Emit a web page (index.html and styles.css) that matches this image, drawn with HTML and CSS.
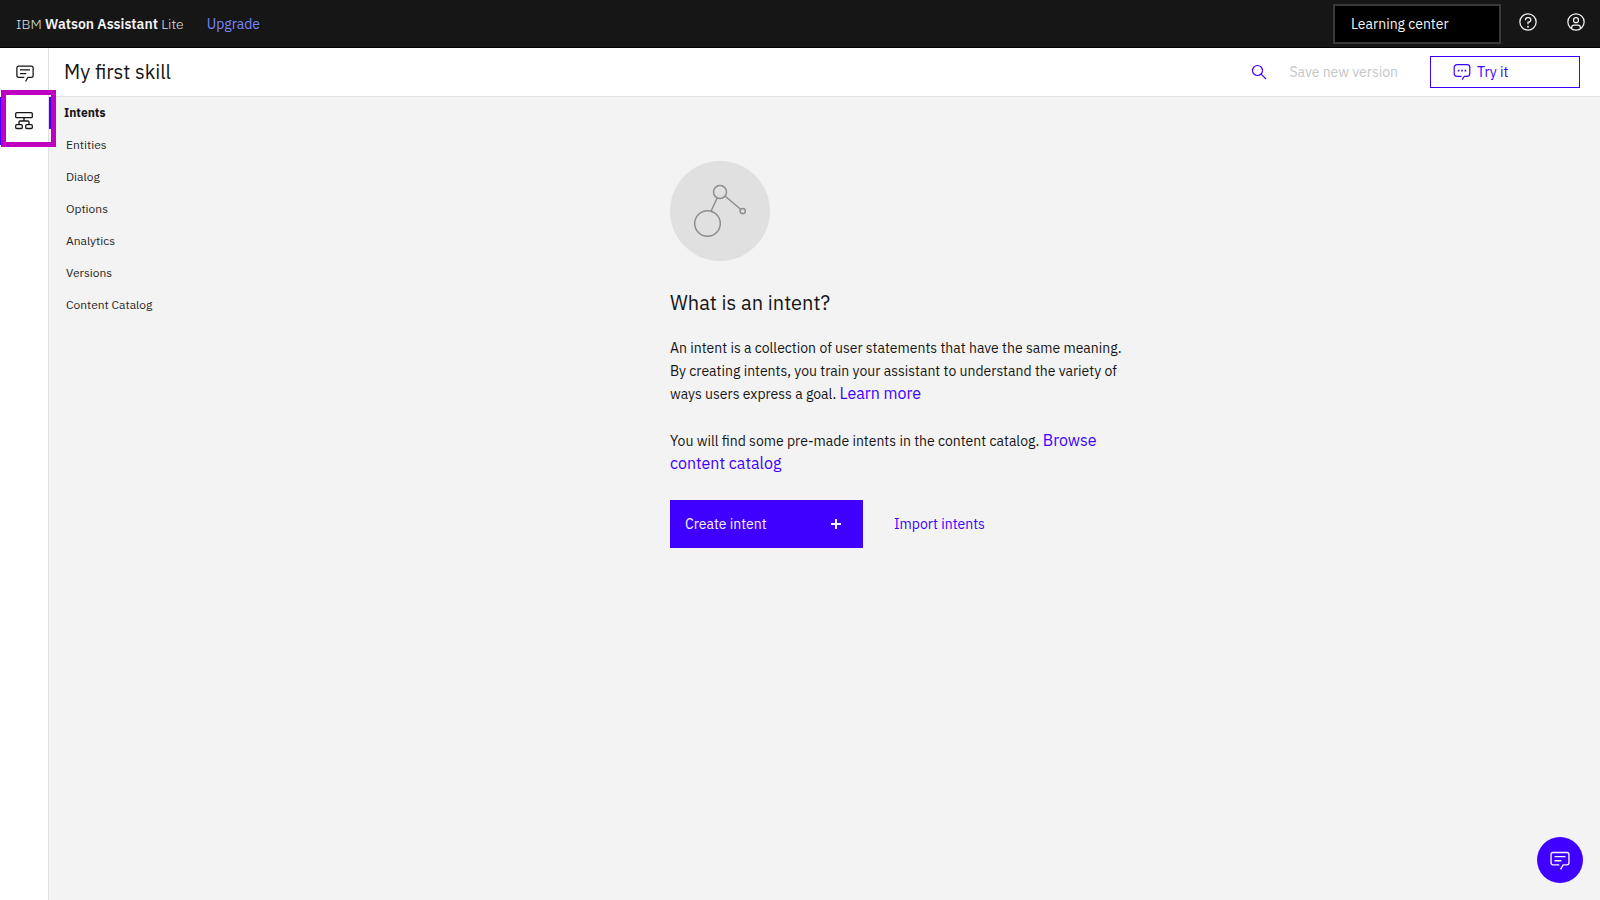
FILE: index.html
```
<!DOCTYPE html>
<html lang="en">
<head>
    <meta charset="UTF-8">
    <meta name="viewport" content="width=device-width, initial-scale=1.0">
    <title>My first skill - IBM Watson Assistant</title>
    <link rel="stylesheet" href="styles.css">
</head>
<body>
    <header class="topbar">
        <div class="brand">IBM <strong>Watson Assistant</strong> Lite</div>
        <a class="upgrade" href="#">Upgrade</a>
        <div class="topbar-right">
            <button class="learning">Learning center</button>
            <button class="icon-button" aria-label="Help">
                <svg width="20" height="20" viewBox="0 0 32 32" fill="currentColor">
                    <path d="M16 2a14 14 0 1 0 14 14A14 14 0 0 0 16 2Zm0 26a12 12 0 1 1 12-12 12 12 0 0 1-12 12Z"/>
                    <circle cx="16" cy="23.5" r="1.5"/>
                    <path d="M17 8h-1.5a4.49 4.49 0 0 0-4.5 4.5v.5h2v-.5a2.5 2.5 0 0 1 2.5-2.5H17a2.5 2.5 0 0 1 0 5h-2v4.5h2V17a4.5 4.5 0 0 0 0-9Z"/>
                </svg>
            </button>
            <button class="icon-button" aria-label="Account">
                <svg width="20" height="20" viewBox="0 0 32 32" fill="currentColor">
                    <path d="M16 8a5 5 0 1 0 5 5 5 5 0 0 0-5-5Zm0 8a3 3 0 1 1 3-3 3 3 0 0 1-3 3Z"/>
                    <path d="M16 2a14 14 0 1 0 14 14A14 14 0 0 0 16 2ZM10 26.4V25a3 3 0 0 1 3-3h6a3 3 0 0 1 3 3v1.4a11.9 11.9 0 0 1-12 0Zm14-1.5a5 5 0 0 0-5-4.900h-6a5 5 0 0 0-5 4.9 12 12 0 1 1 16 0Z"/>
                </svg>
            </button>
        </div>
    </header>

    <div class="layout">
        <nav class="rail" aria-label="Main">
            <a class="rail-item" href="#" aria-label="Assistants">
                <svg width="20" height="20" viewBox="0 0 32 32" fill="currentColor">
                    <path d="M17.74 30 16 29l4-7h6a2 2 0 0 0 2-2V8a2 2 0 0 0-2-2H6a2 2 0 0 0-2 2v12a2 2 0 0 0 2 2h9v2H6a4 4 0 0 1-4-4V8a4 4 0 0 1 4-4h20a4 4 0 0 1 4 4v12a4 4 0 0 1-4 4h-4.84Z"/>
                    <path d="M8 10h16v2H8zM8 16h10v2H8z"/>
                </svg>
            </a>
            <a class="rail-item active" href="#" aria-label="Skills">
                <svg width="20" height="20" viewBox="0 0 20 20" fill="none" stroke="currentColor" stroke-width="1.3">
                    <rect x="1.7" y="1.700" width="16.6" height="5" rx="1"/>
                    <rect x="1.7" y="13.7" width="6.6" height="3.8" rx="1"/>
                    <rect x="11.7" y="13.7" width="6.6" height="3.8" rx="1"/>
                    <path d="M10 6.7V10M5 13.700V11q0-1 1-1h8q1 0 1 1v2.7"/>
                </svg>
                <span class="highlight"></span>
            </a>
        </nav>

        <div class="page">
            <div class="toolbar">
                <h1>My first skill</h1>
                <div class="toolbar-right">
                    <button class="search" aria-label="Search">
                        <svg width="16" height="16" viewBox="0 0 16 16" fill="none" stroke="currentColor" stroke-width="1.2">
                            <circle cx="6.5" cy="6.5" r="5"/>
                            <path d="m10.200 10.200 4.800 4.800"/>
                        </svg>
                    </button>
                    <button class="save" disabled>Save new version</button>
                    <button class="try">
                        <svg width="18" height="18" viewBox="0 0 18 18" fill="none" stroke="currentColor" stroke-width="1.2">
                            <path d="M8.5 13.4H4A2.8 2.8 0 0 1 1.2 10.6V4.5A2.8 2.8 0 0 1 4 1.7h10a2.8 2.8 0 0 1 2.8 2.8v6.100a2.8 2.8 0 0 1-2.8 2.8h-2.7L9 16.700"/>
                            <path d="M4.800 7.600h1.600M8.200 7.600h1.600M11.600 7.600h1.600" stroke-width="1.600"/>
                        </svg>
                        Try it
                    </button>
                </div>
            </div>

            <div class="content">
                <nav class="skill-nav" aria-label="Skill">
                    <a class="current" href="#">Intents</a>
                    <a href="#">Entities</a>
                    <a href="#">Dialog</a>
                    <a href="#">Options</a>
                    <a href="#">Analytics</a>
                    <a href="#">Versions</a>
                    <a href="#">Content Catalog</a>
                </nav>

                <main class="main">
                    <section class="empty">
                        <svg class="picture" width="100" height="100" viewBox="0 0 100 100" fill="none" stroke="#8d8d8d" stroke-width="1.5">
                            <circle cx="50" cy="50" r="50" fill="#e0e0e0" stroke="none"/>
                            <circle cx="37.5" cy="62.5" r="12.8"/>
                            <circle cx="50" cy="31" r="6.5"/>
                            <circle cx="72.7" cy="50" r="2.6"/>
                            <path d="M41 50.2 47.2 37M55.2 35.2 70.6 48.3"/>
                        </svg>
                        <h2>What is an intent?</h2>
                        <p>An intent is a collection of user statements that have the same meaning. By creating intents, you train your assistant to understand the variety of ways users express a goal. <a href="#">Learn more</a></p>
                        <p>You will find some pre-made intents in the content catalog. <a href="#">Browse content catalog</a></p>
                        <div class="actions">
                            <button class="create">
                                Create intent
                                <svg width="10" height="10" viewBox="0 0 10 10" stroke="currentColor" stroke-width="2">
                                    <path d="M5 0v10M0 5h10"/>
                                </svg>
                            </button>
                            <button class="import">Import intents</button>
                        </div>
                    </section>
                </main>
            </div>
        </div>
    </div>

    <button class="chat" aria-label="Open chat">
        <svg width="22" height="22" viewBox="0 0 32 32" fill="currentColor">
            <path d="M17.74 30 16 29l4-7h6a2 2 0 0 0 2-2V8a2 2 0 0 0-2-2H6a2 2 0 0 0-2 2v12a2 2 0 0 0 2 2h9v2H6a4 4 0 0 1-4-4V8a4 4 0 0 1 4-4h20a4 4 0 0 1 4 4v12a4 4 0 0 1-4 4h-4.84Z"/>
            <path d="M8 10h16v2H8zM8 16h10v2H8z"/>
        </svg>
    </button>
</body>
</html>
```
FILE: styles.css
```
* {
    box-sizing: border-box;
}

body {
    margin: 0;
    min-height: 100vh;
    display: flex;
    flex-direction: column;
    font-family: "IBM Plex Sans", Roboto, sans-serif;
    font-size: 14px;
    color: #161616;
    background-color: #f3f3f3;
}

a {
    color: #4000ff;
    text-decoration: none;
}

button {
    padding: 0;
    border: none;
    background: none;
    font-family: inherit;
    font-size: 14px;
    color: #4000ff;
    cursor: pointer;
}

svg {
    display: block;
    flex-shrink: 0;
}

/* Top bar */
.topbar {
    height: 48px;
    padding: 0 14px 0 16px;
    display: flex;
    align-items: center;
    background-color: #161616;
    border-bottom: 1px solid #000;
}

.brand {
    font-size: 14px;
    font-weight: 300;
    color: #e0e0e0;
}

.brand strong {
    font-weight: 600;
    color: #f3f3f3;
}

.upgrade {
    margin-left: 23px;
    color: #7a86ff;
}

.topbar-right {
    margin-left: auto;
    display: flex;
    align-items: center;
}

.learning {
    width: 168px;
    height: 40px;
    margin-right: 17px;
    padding-left: 16px;
    border: 2px solid #393939;
    background-color: #000;
    color: #f3f3f3;
    text-align: left;
}

.icon-button {
    padding-bottom: 3px;
    color: #f3f3f3;
}

.icon-button + .icon-button {
    margin-left: 28px;
}

/* Left rail */
.layout {
    flex: 1;
    display: flex;
}

.rail {
    width: 49px;
    background-color: #fff;
    border-right: 1px solid #e0e0e0;
}

.rail-item {
    position: relative;
    height: 49px;
    padding-left: 2px;
    display: flex;
    align-items: center;
    justify-content: center;
    color: #161616;
}

.rail-item.active {
    height: 48px;
    padding: 0 3px 0 0;
    border-left: 3px solid #4000ff;
}

.highlight {
    position: absolute;
    top: -7px;
    left: -2px;
    width: 55px;
    height: 57px;
    border: 5px solid #c000c0;
}

.page {
    flex: 1;
    display: flex;
    flex-direction: column;
}

/* Skill title bar */
.toolbar {
    height: 49px;
    padding: 0 20px 0 15px;
    display: flex;
    align-items: center;
    background-color: #fff;
    border-bottom: 1px solid #e0e0e0;
}

h1 {
    margin: 0;
    font-size: 20px;
    font-weight: 400;
    line-height: 24px;
}

.toolbar-right {
    margin-left: auto;
    display: flex;
    align-items: center;
}

.save {
    margin: 0 32px 0 22px;
    color: #c6c6c6;
    cursor: default;
}

.try {
    width: 150px;
    height: 32px;
    padding-left: 22px;
    display: flex;
    align-items: center;
    gap: 6px;
    border: 1px solid #4000ff;
}

/* Content */
.content {
    flex: 1;
    display: flex;
}

.skill-nav {
    width: 171px;
}

.skill-nav a {
    display: block;
    padding-left: 17px;
    font-size: 12px;
    line-height: 32px;
    color: #262626;
}

.skill-nav .current {
    padding-left: 12px;
    border-left: 3px solid #4000ff;
    font-weight: 700;
    color: #161616;
}

.main {
    flex: 1;
    padding-top: 64px;
}

.empty {
    max-width: 480px;
    margin: 0 auto;
}

h2 {
    margin: 28px 0 20px;
    font-size: 20px;
    font-weight: 400;
    line-height: 28px;
}

p {
    max-width: 468px;
    margin: 0 0 24px;
    font-size: 14px;
    line-height: 23px;
}

p a {
    font-size: 16px;
    line-height: 16px;
}

.actions {
    display: flex;
    align-items: center;
}

.create {
    width: 193px;
    height: 48px;
    padding: 0 22px 0 15px;
    display: flex;
    align-items: center;
    justify-content: space-between;
    background-color: #4000ff;
    color: #f3f3f3;
}

.import {
    margin-left: 31px;
}

/* Floating chat button */
.chat {
    position: fixed;
    right: 17px;
    bottom: 17px;
    width: 46px;
    height: 46px;
    display: flex;
    align-items: center;
    justify-content: center;
    border-radius: 50%;
    background-color: #4000ff;
    color: #f3f3f3;
}
```
